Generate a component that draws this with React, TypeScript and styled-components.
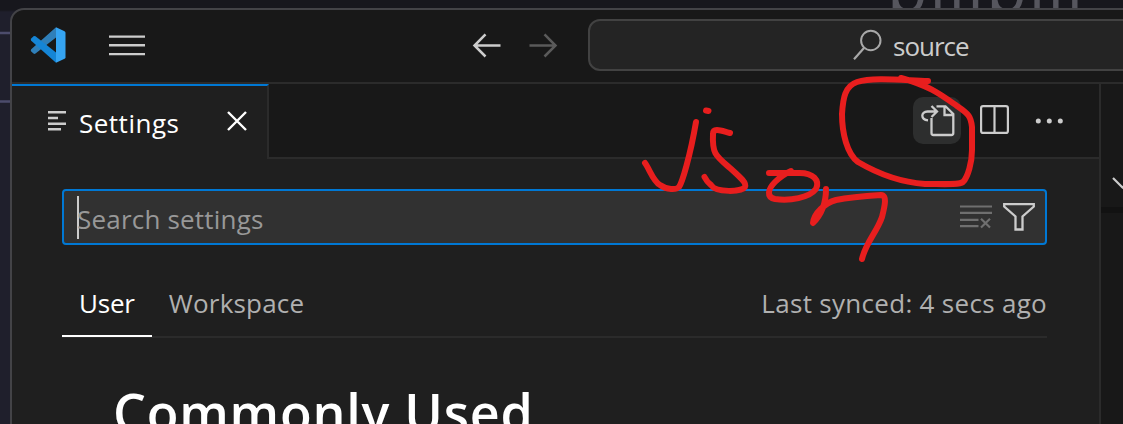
import React from "react";
import styled, { createGlobalStyle } from "styled-components";

const Global = createGlobalStyle`
  * { box-sizing: border-box; }
  body { margin: 0; background: #1d1d29; overflow: hidden; }
  #root { font-family: "Open Sans", "Noto Sans", sans-serif; }
`;

const Desktop = styled.div`
  position: relative;
  display: flex;
  width: 1123px;
  height: 424px;
  overflow: hidden;
  background: linear-gradient(#17171d 0 10px, #1f1f2c 12px);
`;

const Wallpaper = styled.svg`
  position: absolute;
  left: 0;
  top: 0;
`;

const WallpaperWord = styled.div`
  position: absolute;
  left: 887px;
  top: -43px;
  font-size: 66px;
  line-height: 60px;
  letter-spacing: 2.2px;
  color: #56565e;
`;

const Window = styled.div`
  position: relative;
  display: flex;
  flex-direction: column;
  flex: none;
  width: 1140px;
  height: 440px;
  margin: 8px 0 0 10px;
  border: 2px solid #434347;
  border-radius: 14px 0 0 0;
  background: #181818;
  overflow: hidden;
`;

const TitleBar = styled.header`
  display: flex;
  align-items: center;
  flex: none;
  height: 74px;
  padding: 0 0 2px 18px;
  border-bottom: 2px solid #2b2b2b;
`;

const Icon = styled.svg<{ $ml?: number; $mb?: number }>`
  display: block;
  flex: none;
  margin-left: ${(p) => p.$ml ?? 0}px;
  margin-bottom: ${(p) => p.$mb ?? 0}px;
  overflow: visible;
`;

const CommandCenter = styled.div`
  display: flex;
  align-items: center;
  flex: none;
  width: 700px;
  height: 52px;
  margin-left: 31px;
  padding-left: 263px;
  border: 2px solid #424242;
  border-radius: 12px;
  background: #242424;
`;

const Label = styled.span<{ $color: string; $spacing?: number; $ml?: number; $mt?: number }>`
  margin-left: ${(p) => p.$ml ?? 0}px;
  margin-top: ${(p) => p.$mt ?? 0}px;
  font-size: 26px;
  line-height: 36px;
  letter-spacing: ${(p) => p.$spacing ?? 0.2}px;
  color: ${(p) => p.$color};
  white-space: nowrap;
`;

const Body = styled.div`
  display: flex;
  flex: 1;
`;

const Editor = styled.main`
  display: flex;
  flex-direction: column;
  width: 1089px;
  border-right: 2px solid #2b2b2b;
  background: #1f1f1f;
`;

const TabStrip = styled.div`
  display: flex;
  flex: none;
  height: 75px;
`;

const Tab = styled.div`
  display: flex;
  align-items: center;
  width: 257px;
  padding: 0 21px 0 36px;
  border-top: 2px solid #0078d4;
  border-right: 2px solid #2b2b2b;
  background: #1f1f1f;
`;

const Actions = styled.div`
  display: flex;
  align-items: center;
  justify-content: flex-end;
  flex: 1;
  padding: 0 35px 0 0;
  border-bottom: 2px solid #2b2b2b;
  background: #181818;
`;

const ActionButton = styled.button`
  display: flex;
  align-items: center;
  justify-content: center;
  width: 48px;
  height: 47px;
  padding: 0;
  border: 0;
  border-radius: 10px;
  background: #2d2e2e;
`;

const SearchBox = styled.div`
  display: flex;
  align-items: center;
  width: 985px;
  height: 56px;
  margin: 30px 0 0 50px;
  padding: 0 10px 0 13px;
  border: 2px solid #0078d4;
  border-radius: 4px;
  background: #313131;
`;

const Caret = styled.span`
  width: 2px;
  height: 43px;
  background: #cccccc;
`;

const Spacer = styled.span`
  flex: 1;
`;

const ScopeRow = styled.div`
  display: flex;
  width: 985px;
  height: 68px;
  margin: 25px 0 0 50px;
  border-bottom: 2px solid #2b2b2b;
`;

const Scope = styled.div<{ $active?: boolean }>`
  display: flex;
  align-items: center;
  height: 67px;
  padding: 0 17px 0 17px;
  border-bottom: 2px solid ${(p) => (p.$active ? "#ffffff" : "transparent")};
`;

const SyncStatus = styled.div`
  display: flex;
  align-items: center;
  height: 65px;
`;

const Heading = styled.h1`
  margin: 38px 0 0 101px;
  font-size: 52px;
  line-height: 72px;
  font-weight: 650;
  letter-spacing: 0.75px;
  color: #ffffff;
  white-space: nowrap;
`;

const SidePanel = styled.aside`
  flex: 1;
  background: #181818;
`;

const PanelHeader = styled.div`
  display: flex;
  align-items: center;
  height: 129px;
  padding: 75px 0 0 11px;
  border-bottom: 6px solid #121212;
`;

const Ink = styled.svg`
  position: absolute;
  left: 0;
  top: 0;
  pointer-events: none;
`;

export default function App() {
  return (
    <>
      <Global />
      <Desktop>
        <Wallpaper width="1123" height="424">
          <path d="M0 33H11M0 101.500H11" stroke="#4c4c6c" strokeWidth="2.500" />
        </Wallpaper>
        <WallpaperWord>bilibili</WallpaperWord>
        <Window>
          <TitleBar>
            <Icon width="36" height="36" viewBox="0 0 36 36">
              <path d="M26 0.300V10.500L5.500 26.500Q4.500 27.300 3.500 26.500L1.200 24.500Q0.300 23.500 1.200 22.300Z" fill="#2f7fb9" />
              <path d="M26 35.700V25.500L5.500 9.300Q4.500 8.600 3.500 9.300L1.200 11.500Q0.300 12.500 1.200 13.700Z" fill="#1585d6" />
              <path d="M26 0.300 34.500 4.200Q35.500 4.700 35.500 5.700V30.300Q35.500 31.300 34.500 31.800L26 35.700Z" fill="#35a4f2" />
            </Icon>
            <Icon $ml={43} width="36" height="22" viewBox="0 0 36 22">
              <path d="M0 2.600H36M0 11.300H36M0 20.100H36" stroke="#cccccc" strokeWidth="2.400" />
            </Icon>
            <Icon $ml={328} width="28" height="24" viewBox="0 0 28 24">
              <path d="M12.500 1.300 1.500 12.500 12.500 23.500M1.500 12.500H27.500" fill="none" stroke="#cccccc" strokeWidth="2.500" />
            </Icon>
            <Icon $ml={28} width="28" height="24" viewBox="0 0 28 24">
              <path d="M15.500 1.300 26.500 12.500 15.500 23.500M26.500 12.500H0.500" fill="none" stroke="#5a5a5a" strokeWidth="2.500" />
            </Icon>
            <CommandCenter>
              <Icon width="29" height="30" viewBox="0 0 29 30">
                <circle cx="17.800" cy="10.500" r="9.700" fill="none" stroke="#a8a8a8" strokeWidth="2" />
                <path d="M11 18 1 29.300" stroke="#a8a8a8" strokeWidth="2.200" />
              </Icon>
              <Label $color="#cccccc" $ml={11} $mt={1} $spacing={-1}>source</Label>
            </CommandCenter>
          </TitleBar>
          <Body>
            <Editor>
              <TabStrip>
                <Tab>
                  <Icon $mb={3} width="18" height="20" viewBox="0 0 18 20">
                    <path d="M0 1.300H18M0 7H10M0 12.700H18M0 18.300H13" stroke="#cccccc" strokeWidth="2.400" />
                  </Icon>
                  <Label $color="#ffffff" $ml={13} $spacing={0.5}>Settings</Label>
                  <Spacer />
                  <Icon $mb={4} width="18" height="18" viewBox="0 0 18 18">
                    <path d="M0 0 18 18M18 0 0 18" stroke="#ffffff" strokeWidth="2.400" />
                  </Icon>
                </Tab>
                <Actions>
                  <ActionButton>
                    <Icon width="34" height="32" viewBox="0 0 34 32">
                      <path d="M16.500 1.300H25.500L33.300 9V28Q33.300 30 31.300 30H13.500Q11.500 30 11.500 28V13M24.500 1.500V10H33" fill="none" stroke="#cccccc" strokeWidth="2.300" />
                      <path d="M8 15.300C0.500 14.500 0.500 6.500 7.500 6.500H17M11.500 1 17 6.500 11.500 12" fill="none" stroke="#cccccc" strokeWidth="2.300" />
                    </Icon>
                  </ActionButton>
                  <Icon $ml={19} $mb={3} width="29" height="29" viewBox="0 0 29 29">
                    <rect x="1.100" y="1.100" width="26.800" height="26.800" rx="2" fill="none" stroke="#cccccc" strokeWidth="2.200" />
                    <path d="M14.500 1V28" stroke="#cccccc" strokeWidth="2.200" />
                  </Icon>
                  <Icon $ml={27} width="28" height="6" viewBox="0 0 28 6">
                    <circle cx="2.300" cy="3" r="2.500" fill="#cccccc" />
                    <circle cx="13.300" cy="3" r="2.500" fill="#cccccc" />
                    <circle cx="24.300" cy="3" r="2.500" fill="#cccccc" />
                  </Icon>
                </Actions>
              </TabStrip>
              <SearchBox>
                <Caret />
                <Label $color="#989898" $ml={-2} $mt={3}>Search settings</Label>
                <Spacer />
                <Icon width="32" height="24" viewBox="0 0 32 24">
                  <path d="M0 1.500H32M0 7.800H32M0 14.800H18.500M0 21.200H18.500" stroke="#6f6f6f" strokeWidth="2.200" />
                  <path d="M21 13.800 30 22.500M30 13.800 21 22.500" stroke="#6f6f6f" strokeWidth="2.200" />
                </Icon>
                <Icon $ml={11} width="32" height="28" viewBox="0 0 32 28">
                  <path d="M1.200 1.200H30.800V3.500L19.500 13.500V26.500H12.500V13.500L1.200 3.500Z" fill="none" stroke="#cccccc" strokeWidth="2.300" />
                </Icon>
              </SearchBox>
              <ScopeRow>
                <Scope $active>
                  <Label $color="#ffffff" $spacing={-0.2}>User</Label>
                </Scope>
                <Scope>
                  <Label $color="#b0b0b0">Workspace</Label>
                </Scope>
                <Spacer />
                <SyncStatus>
                  <Label $color="#b0b0b0" $spacing={0.3}>Last synced: 4 secs ago</Label>
                </SyncStatus>
              </ScopeRow>
              <Heading>Commonly Used</Heading>
            </Editor>
            <SidePanel>
              <PanelHeader>
                <Icon width="20" height="12" viewBox="0 0 20 12">
                  <path d="M1 1 10.500 10.500 20 1" fill="none" stroke="#cccccc" strokeWidth="2.200" />
                </Icon>
              </PanelHeader>
            </SidePanel>
          </Body>
        </Window>
        <Ink width="1123" height="424" fill="none" stroke="#e81e1e" strokeWidth="6" strokeLinecap="round" strokeLinejoin="round">
          <path d="M645 163C650 170 653 181 660 185C667 190 676 190 679 187C682 183 690 157 696 122" />
          <path d="M706 110.500 708.500 111" />
          <path d="M730 133C722 131 713 127 713 134C712 154 716 156 730 168C740 177 747 183 745 187C742 192 716 193 711 185Q707 182 704.500 177" />
          <path d="M769 173H797C814 172 820 181 816 189C809 198 790 201 775 199C766 197 768 189 775 182Q782 175 791 171" />
          <path d="M826 189C826 203 822 214 813 223C814 213 825 203 836 200C851 197 866 196 881 195C888 195 884 209 882 217C877 232 866 242 862 259" />
          <path d="M928 81C900 80 873 77 857 82C845 86 843 98 842 114C842 133 847 154 858 162C875 172 897 182 925 184C943 184 959 185 963 182C968 177 972 162 972 150V127C971 117 969 114 957 106C940 94 930 86 901 78" />
        </Ink>
      </Desktop>
    </>
  );
}
